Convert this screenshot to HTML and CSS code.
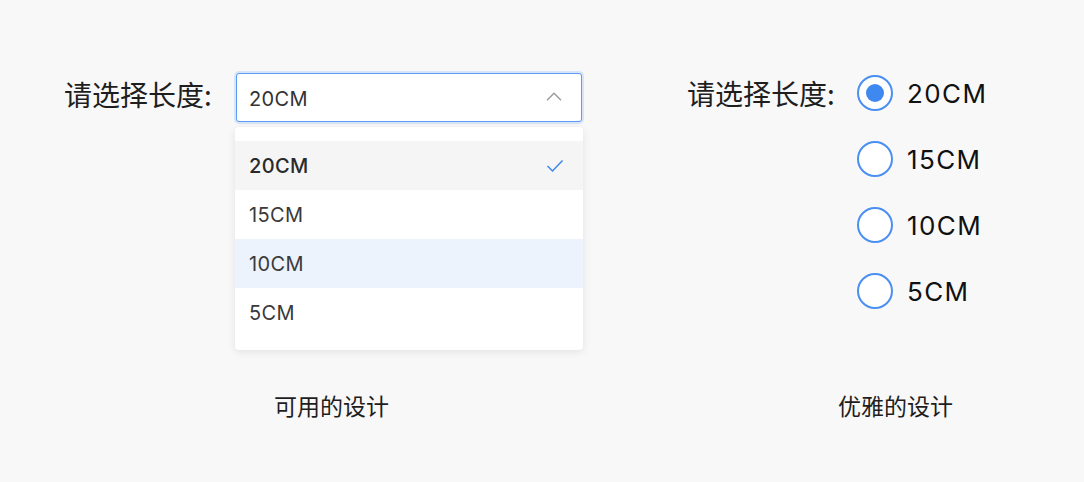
FILE: index.html
```html
<!DOCTYPE html>
<html lang="zh-CN">
<head>
<meta charset="utf-8">
<title>设计对比</title>
<link rel="stylesheet" href="styles.css">
</head>
<body>
<main class="page">
  <section class="demo demo-select">
    <div class="field-label">请选择长度:</div>
    <div class="select-col">
      <div class="select-box">
        <span class="select-value">20CM</span>
        <svg class="chevron" width="16" height="9" viewBox="0 0 16 9"><path d="M1 8.2 L8 1.2 L15 8.2" fill="none" stroke="#9a9a9a" stroke-width="1.4"/></svg>
      </div>
      <ul class="menu">
        <li class="menu-item is-selected"><span>20CM</span>
          <svg class="check" width="18" height="14" viewBox="0 0 18 14"><path d="M1.5 7 L6.5 12 L16.5 1.5" fill="none" stroke="#3f86ee" stroke-width="1.5"/></svg>
        </li>
        <li class="menu-item"><span>15CM</span></li>
        <li class="menu-item is-hover"><span>10CM</span></li>
        <li class="menu-item"><span>5CM</span></li>
      </ul>
    </div>
  </section>
  <section class="demo demo-radio">
    <div class="field-label radio-label">请选择长度:</div>
    <div class="radio-list">
      <div class="radio-row"><span class="radio is-checked"></span><span class="radio-text">20CM</span></div>
      <div class="radio-row"><span class="radio"></span><span class="radio-text">15CM</span></div>
      <div class="radio-row"><span class="radio"></span><span class="radio-text">10CM</span></div>
      <div class="radio-row"><span class="radio"></span><span class="radio-text">5CM</span></div>
    </div>
  </section>
  <div class="caption caption-left">可用的设计</div>
  <div class="caption caption-right">优雅的设计</div>
</main>
</body>
</html>
```

FILE: styles.css
```css
html, body {
  margin: 0;
  padding: 0;
}
body {
  background: #f8f8f8;
  font-family: "Inter", "Noto Sans CJK SC", sans-serif;
  color: #222;
  width: 1084px;
  height: 482px;
  overflow: hidden;
}
.page {
  display: grid;
  grid-template-columns: 623px 397px;
  grid-template-rows: 394px auto;
  padding-left: 64px;
}
.demo {
  display: flex;
  align-items: flex-start;
}
.demo-select {
  padding-top: 73px;
}
.field-label {
  font-family: "Noto Sans CJK SC", sans-serif;
  font-size: 28px;
  line-height: 42px;
  color: #1e1e1e;
  width: 172px;
  flex: none;
  white-space: nowrap;
}
.select-col {
  display: flex;
  flex-direction: column;
  width: 346px;
}
.select-box {
  box-sizing: border-box;
  height: 49px;
  border: 1px solid #5b9bf5;
  border-radius: 3px;
  box-shadow: 0 0 0 2px rgba(91, 155, 245, 0.2);
  background: #fff;
  display: flex;
  align-items: center;
  justify-content: space-between;
  padding: 2px 19px 0 12px;
}
.select-value {
  font-size: 20px;
  letter-spacing: 0.4px;
  color: #333;
}
.chevron {
  display: block;
  margin-top: -4px;
}
.menu {
  list-style: none;
  margin: 5px 0 0 -1px;
  padding: 14px 0 13px;
  width: 348px;
  background: #fff;
  border-radius: 4px;
  box-shadow: 0 2px 8px rgba(0, 0, 0, 0.09);
}
.menu-item {
  height: 49px;
  display: flex;
  align-items: center;
  justify-content: space-between;
  padding: 0 19px 0 14px;
  font-size: 20px;
  letter-spacing: 0.4px;
  color: #3a3a3a;
}
.menu-item.is-selected {
  background: #f5f5f5;
  font-weight: 500;
  color: #2a2a2a;
}
.menu-item.is-hover {
  background: #ecf3fd;
}
.check {
  display: block;
}
.demo-radio {
  padding-top: 75px;
}
.radio-label {
  width: 170px;
  line-height: 36px;
}
.radio-list {
  display: flex;
  flex-direction: column;
  gap: 30px;
}
.radio-row {
  display: flex;
  align-items: center;
  height: 36px;
  gap: 14px;
}
.radio {
  box-sizing: border-box;
  width: 36px;
  height: 36px;
  border: 2px solid #4a8ff2;
  border-radius: 50%;
  background: #fff;
  display: flex;
  align-items: center;
  justify-content: center;
  flex: none;
}
.radio.is-checked::after {
  content: "";
  width: 18px;
  height: 18px;
  border-radius: 50%;
  background: #3f88f0;
}
.radio-text {
  font-size: 26px;
  letter-spacing: 1.4px;
  color: #111;
}
.caption {
  font-family: "Noto Sans CJK SC", sans-serif;
  font-size: 23px;
  line-height: 22px;
  color: #1e1e1e;
}
.caption-left {
  padding-left: 210px;
}
.caption-right {
  padding-left: 151px;
}
```
